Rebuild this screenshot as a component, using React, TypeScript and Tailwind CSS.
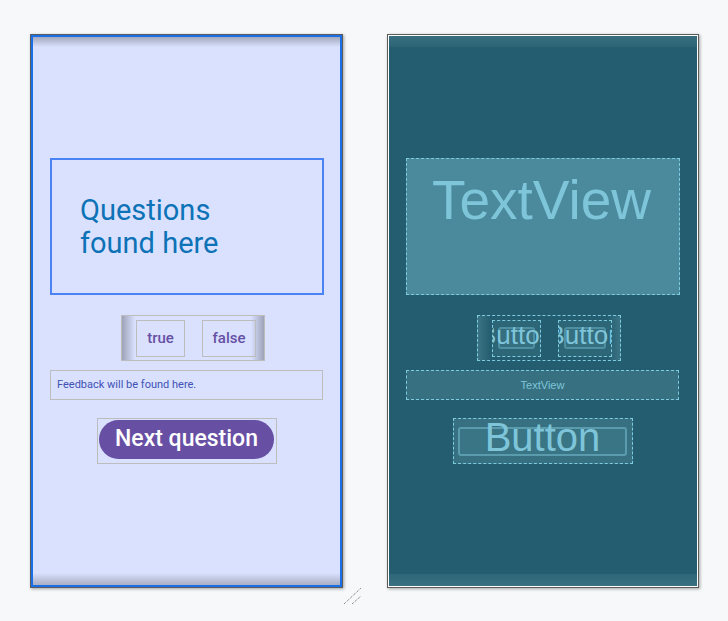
import React from 'react';

const roboto = { fontFamily: 'Roboto, "Noto Sans", sans-serif' };
const arial = { fontFamily: '"Liberation Sans", Arial, sans-serif' };

// design surface (left) and blueprint surface (right) of the layout editor
function DesignScreen() {
  return (
    <div className="relative w-[313px] h-[554px] border border-[#5c5c5c] shadow-[1px_1px_3px_rgba(0,0,0,0.35)]">
      <div className="h-full border-2 border-[#1a6fe6] bg-[#d9e1fe] flex flex-col" style={roboto}>
        <div className="h-[10px] shrink-0 bg-gradient-to-b from-[#a3a8bd] to-[#d9e1fe]" />

        <div className="ml-[17px] mt-[111px] w-[274px] h-[137px] border-2 border-[#4a84f4] pl-[28px] pt-[34px]">
          <p className="text-[29px] leading-[33px] text-[#0d72b6]">
            Questions
            <br />
            found here
          </p>
        </div>

        <div className="ml-[88px] mt-[20px] w-[144px] h-[46px] border border-[#bdbdbd] flex items-center pl-[14px] bg-[linear-gradient(to_right,#9ea3b8,rgba(217,225,254,0)_13px),linear-gradient(to_left,#9ea3b8,rgba(217,225,254,0)_13px)]">
          <div className="w-[49px] h-[37px] border border-[#bdbdbd] flex items-center justify-center text-[15px] font-medium text-[#6750a4]">
            true
          </div>
          <div className="ml-[17px] w-[54px] h-[37px] border border-[#bdbdbd] flex items-center justify-center text-[15px] font-medium text-[#6750a4]">
            false
          </div>
        </div>

        <div className="ml-[17px] mt-[9px] w-[273px] h-[30px] border border-[#bdbdbd] flex items-center pl-[6px] text-[11px] text-[#3f51b5]">
          Feedback will be found here.
        </div>

        <div className="ml-[64px] mt-[18px] w-[180px] h-[46px] border border-[#bdbdbd] pl-[1px] pr-[2px] pt-[1px]">
          <div className="h-[39px] rounded-full bg-[#6750a4] flex items-center justify-center text-white text-[23px] font-medium">
            Next question
          </div>
        </div>

        <div className="mt-auto h-[12px] shrink-0 bg-gradient-to-b from-[#d9e1fe] to-[#a9aec3]" />
      </div>

      <svg className="absolute left-[312px] top-[552px]" width="20" height="20" viewBox="0 0 20 20">
        <line x1="1" y1="17" x2="18" y2="1" stroke="#666" strokeWidth="1" strokeDasharray="1 1" />
        <line x1="9" y1="17" x2="18" y2="9" stroke="#666" strokeWidth="1" strokeDasharray="1 1" />
      </svg>
    </div>
  );
}

function BlueprintScreen() {
  return (
    <div className="w-[312px] h-[554px] border border-[#5c5c5c] shadow-[1px_1px_3px_rgba(0,0,0,0.35)]">
      <div className="h-full border border-white bg-[#235d6f] flex flex-col" style={arial}>
        <div className="h-[11px] shrink-0 bg-gradient-to-b from-[#386e80] to-[#2b6476]" />

        <div className="ml-[17px] mt-[111px] w-[274px] h-[137px] border border-dashed border-[#7ccbe0] bg-[#4a8a9c] pl-[25px] pt-[14px]">
          <span className="block text-[55px] leading-none text-[#7ec5da]">TextView</span>
        </div>

        <div className="ml-[88px] mt-[20px] w-[144px] h-[46px] border border-dashed border-[#7ccbe0] flex items-center pl-[14px] bg-[linear-gradient(to_right,#3b7384,rgba(35,93,111,0)_13px),linear-gradient(to_left,#3b7384,rgba(35,93,111,0)_13px)]">
          <div className="w-[49px] h-[37px] border border-dashed border-[#7ccbe0] bg-[#2c6677] overflow-hidden px-[5px] pt-[6px] pb-[7px]">
            <div className="h-full rounded-[3px] border-2 border-[#4e8fa1] bg-[#356f80] flex items-center justify-center">
              <span className="whitespace-nowrap text-[26px] leading-none text-[#7ec5da] mb-[6px]">Button</span>
            </div>
          </div>
          <div className="ml-[17px] w-[54px] h-[37px] border border-dashed border-[#7ccbe0] bg-[#2c6677] overflow-hidden px-[5px] pt-[6px] pb-[7px]">
            <div className="h-full rounded-[3px] border-2 border-[#4e8fa1] bg-[#356f80] flex items-center justify-center">
              <span className="whitespace-nowrap text-[26px] leading-none text-[#7ec5da] mb-[6px]">Button</span>
            </div>
          </div>
        </div>

        <div className="ml-[17px] mt-[9px] w-[273px] h-[30px] border border-dashed border-[#7ccbe0] bg-[#377181] flex items-center justify-center text-[11px] text-[#7ec5da]">
          TextView
        </div>

        <div className="ml-[64px] mt-[18px] w-[180px] h-[46px] border border-dashed border-[#7ccbe0] bg-[#377181] pl-[4px] pr-[5px] pt-[8px] pb-[7px]">
          <div className="h-full rounded-[3px] border-2 border-[#5a9bad] bg-[#3a7585] flex items-center justify-center">
            <span className="whitespace-nowrap text-[40px] leading-none text-[#7ec5da] mb-[10px]">Button</span>
          </div>
        </div>

        <div className="mt-auto h-[12px] shrink-0 bg-gradient-to-b from-[#2d6779] to-[#3a7081]" />
      </div>
    </div>
  );
}

export default function App() {
  return (
    <div className="w-[728px] h-[621px] bg-[#f7f8fa] flex items-start gap-[44px] pl-[30px] pt-[34px] overflow-hidden">
      <DesignScreen />
      <BlueprintScreen />
    </div>
  );
}
